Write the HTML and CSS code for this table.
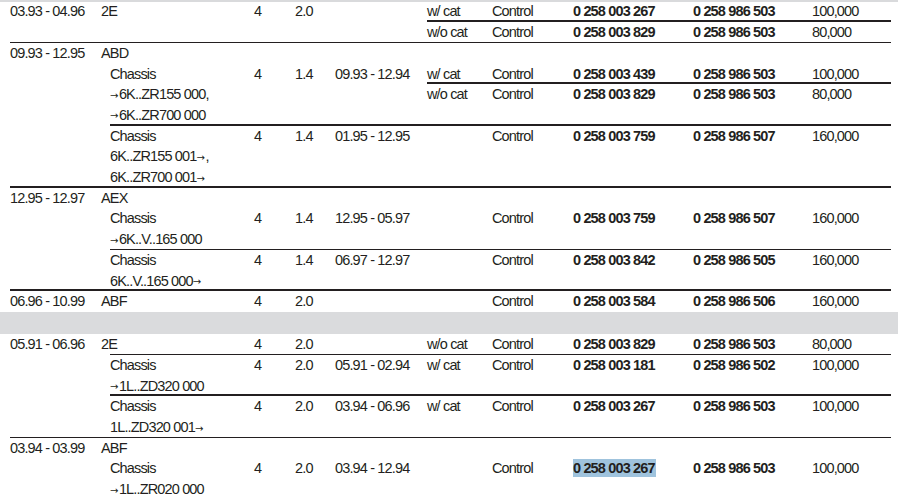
FILE: index.html
```html
<!DOCTYPE html>
<html lang="en">
<head>
<meta charset="utf-8">
<title>Parts table</title>
<link rel="stylesheet" href="styles.css">
</head>
<body>
<div class="strip"></div>
<div class="sheet first">
  <div class="group">
    <div class="date">03.93 - 04.96</div>
    <div class="body">
      <div class="variant">
        <div class="engine">2E</div>
        <div class="cyl">4</div>
        <div class="disp">2.0</div>
        <div class="period"></div>
        <div class="cats">
          <div class="cat-row"><span class="cat">w/ cat</span><span class="ctl">Control</span><span class="pn">0 258 003 267</span><span class="pn2">0 258 986 503</span><span class="km">100,000</span></div>
          <div class="cat-row rule-thick"><span class="cat">w/o cat</span><span class="ctl">Control</span><span class="pn">0 258 003 829</span><span class="pn2">0 258 986 503</span><span class="km">80,000</span></div>
        </div>
      </div>
    </div>
  </div>

  <div class="group rule-thin">
    <div class="date">09.93 - 12.95</div>
    <div class="body">
      <div class="head">ABD</div>
      <div class="variant chassis">
        <div class="engine">Chassis<br><span class="arr">&rarr;</span>6K..ZR155 000,<br><span class="arr">&rarr;</span>6K..ZR700 000</div>
        <div class="cyl">4</div>
        <div class="disp">1.4</div>
        <div class="period">09.93 - 12.94</div>
        <div class="cats">
          <div class="cat-row"><span class="cat">w/ cat</span><span class="ctl">Control</span><span class="pn">0 258 003 439</span><span class="pn2">0 258 986 503</span><span class="km">100,000</span></div>
          <div class="cat-row rule-thick"><span class="cat">w/o cat</span><span class="ctl">Control</span><span class="pn">0 258 003 829</span><span class="pn2">0 258 986 503</span><span class="km">80,000</span></div>
        </div>
      </div>
      <div class="variant chassis rule-thick">
        <div class="engine">Chassis<br>6K..ZR155 001<span class="arr">&rarr;</span>,<br>6K..ZR700 001<span class="arr">&rarr;</span></div>
        <div class="cyl">4</div>
        <div class="disp">1.4</div>
        <div class="period">01.95 - 12.95</div>
        <div class="cats">
          <div class="cat-row"><span class="cat"></span><span class="ctl">Control</span><span class="pn">0 258 003 759</span><span class="pn2">0 258 986 507</span><span class="km">160,000</span></div>
        </div>
      </div>
    </div>
  </div>

  <div class="group rule-thick">
    <div class="date">12.95 - 12.97</div>
    <div class="body">
      <div class="head">AEX</div>
      <div class="variant chassis">
        <div class="engine">Chassis<br><span class="arr">&rarr;</span>6K..V..165 000</div>
        <div class="cyl">4</div>
        <div class="disp">1.4</div>
        <div class="period">12.95 - 05.97</div>
        <div class="cats">
          <div class="cat-row"><span class="cat"></span><span class="ctl">Control</span><span class="pn">0 258 003 759</span><span class="pn2">0 258 986 507</span><span class="km">160,000</span></div>
        </div>
      </div>
      <div class="variant chassis rule-thin">
        <div class="engine">Chassis<br>6K..V..165 000<span class="arr">&rarr;</span></div>
        <div class="cyl">4</div>
        <div class="disp">1.4</div>
        <div class="period">06.97 - 12.97</div>
        <div class="cats">
          <div class="cat-row"><span class="cat"></span><span class="ctl">Control</span><span class="pn">0 258 003 842</span><span class="pn2">0 258 986 505</span><span class="km">160,000</span></div>
        </div>
      </div>
    </div>
  </div>

  <div class="group rule-thick">
    <div class="date">06.96 - 10.99</div>
    <div class="body">
      <div class="variant">
        <div class="engine">ABF</div>
        <div class="cyl">4</div>
        <div class="disp">2.0</div>
        <div class="period"></div>
        <div class="cats">
          <div class="cat-row"><span class="cat"></span><span class="ctl">Control</span><span class="pn">0 258 003 584</span><span class="pn2">0 258 986 506</span><span class="km">160,000</span></div>
        </div>
      </div>
    </div>
  </div>
</div>

<div class="band"></div>

<div class="sheet">
  <div class="group">
    <div class="date">05.91 - 06.96</div>
    <div class="body">
      <div class="variant">
        <div class="engine">2E</div>
        <div class="cyl">4</div>
        <div class="disp">2.0</div>
        <div class="period"></div>
        <div class="cats">
          <div class="cat-row"><span class="cat">w/o cat</span><span class="ctl">Control</span><span class="pn">0 258 003 829</span><span class="pn2">0 258 986 503</span><span class="km">80,000</span></div>
        </div>
      </div>
      <div class="variant chassis rule-thin">
        <div class="engine">Chassis<br><span class="arr">&rarr;</span>1L..ZD320 000</div>
        <div class="cyl">4</div>
        <div class="disp">2.0</div>
        <div class="period">05.91 - 02.94</div>
        <div class="cats">
          <div class="cat-row"><span class="cat">w/ cat</span><span class="ctl">Control</span><span class="pn">0 258 003 181</span><span class="pn2">0 258 986 502</span><span class="km">100,000</span></div>
        </div>
      </div>
      <div class="variant chassis rule-thick">
        <div class="engine">Chassis<br>1L..ZD320 001<span class="arr">&rarr;</span></div>
        <div class="cyl">4</div>
        <div class="disp">2.0</div>
        <div class="period">03.94 - 06.96</div>
        <div class="cats">
          <div class="cat-row"><span class="cat">w/ cat</span><span class="ctl">Control</span><span class="pn">0 258 003 267</span><span class="pn2">0 258 986 503</span><span class="km">100,000</span></div>
        </div>
      </div>
    </div>
  </div>

  <div class="group rule-thin">
    <div class="date">03.94 - 03.99</div>
    <div class="body">
      <div class="head">ABF</div>
      <div class="variant chassis">
        <div class="engine">Chassis<br><span class="arr">&rarr;</span>1L..ZR020 000</div>
        <div class="cyl">4</div>
        <div class="disp">2.0</div>
        <div class="period">03.94 - 12.94</div>
        <div class="cats">
          <div class="cat-row"><span class="cat"></span><span class="ctl">Control</span><span class="pn"><mark class="sel">0 258 003 267</mark></span><span class="pn2">0 258 986 503</span><span class="km">100,000</span></div>
        </div>
      </div>
    </div>
  </div>
</div>
</body>
</html>
```

FILE: styles.css
```css
html, body {
  margin: 0;
  padding: 0;
  background: #ffffff;
}
body {
  font-family: "Liberation Sans", Arial, sans-serif;
  font-size: 14.5px;
  letter-spacing: -0.85px;
  line-height: 20.7px;
  color: #231f20;
  height: 500px;
  overflow: hidden;
}
.arr {
  font-family: "DejaVu Sans", sans-serif;
  font-size: 10px;
  line-height: 0;
  letter-spacing: 0;
  margin-right: 0.5px;
  vertical-align: 0.5px;
}
.strip {
  height: 2px;
  background: #d9dadc;
}
.band {
  height: 22.3px;
  background: #dadbdd;
}
.sheet {
  padding-left: 10px;
  width: 881px;
}
.sheet.first {
  margin-top: -0.6px;
}
.group {
  display: flex;
}
.rule-thin {
  border-top: 1px solid #231f20;
  margin-top: -1px;
}
.rule-thick {
  border-top: 2px solid #231f20;
  margin-top: -2px;
}
.date {
  width: 91px;
  flex: none;
  white-space: nowrap;
}
.body {
  flex: 1;
  display: flex;
  flex-direction: column;
}
.variant {
  display: flex;
}
.variant.chassis {
  margin-left: 9px;
}
.engine {
  width: 153px;
  flex: none;
  white-space: nowrap;
}
.chassis .engine {
  width: 144px;
}
.cyl {
  width: 41px;
  flex: none;
}
.disp {
  width: 40px;
  flex: none;
}
.period {
  width: 92px;
  flex: none;
  white-space: nowrap;
}
.cats {
  flex: 1;
  display: flex;
  flex-direction: column;
}
.cat-row {
  display: flex;
  white-space: nowrap;
}
.cat {
  width: 65px;
  flex: none;
}
.ctl {
  width: 81px;
  flex: none;
}
.pn {
  width: 120px;
  flex: none;
  font-weight: 700;
}
.pn2 {
  width: 119px;
  flex: none;
  font-weight: 700;
}
.km {
  width: 78px;
  flex: none;
}
.sel {
  background: #9fc3dd;
  color: inherit;
  padding: 1px 1px 1px 0;
}
```
